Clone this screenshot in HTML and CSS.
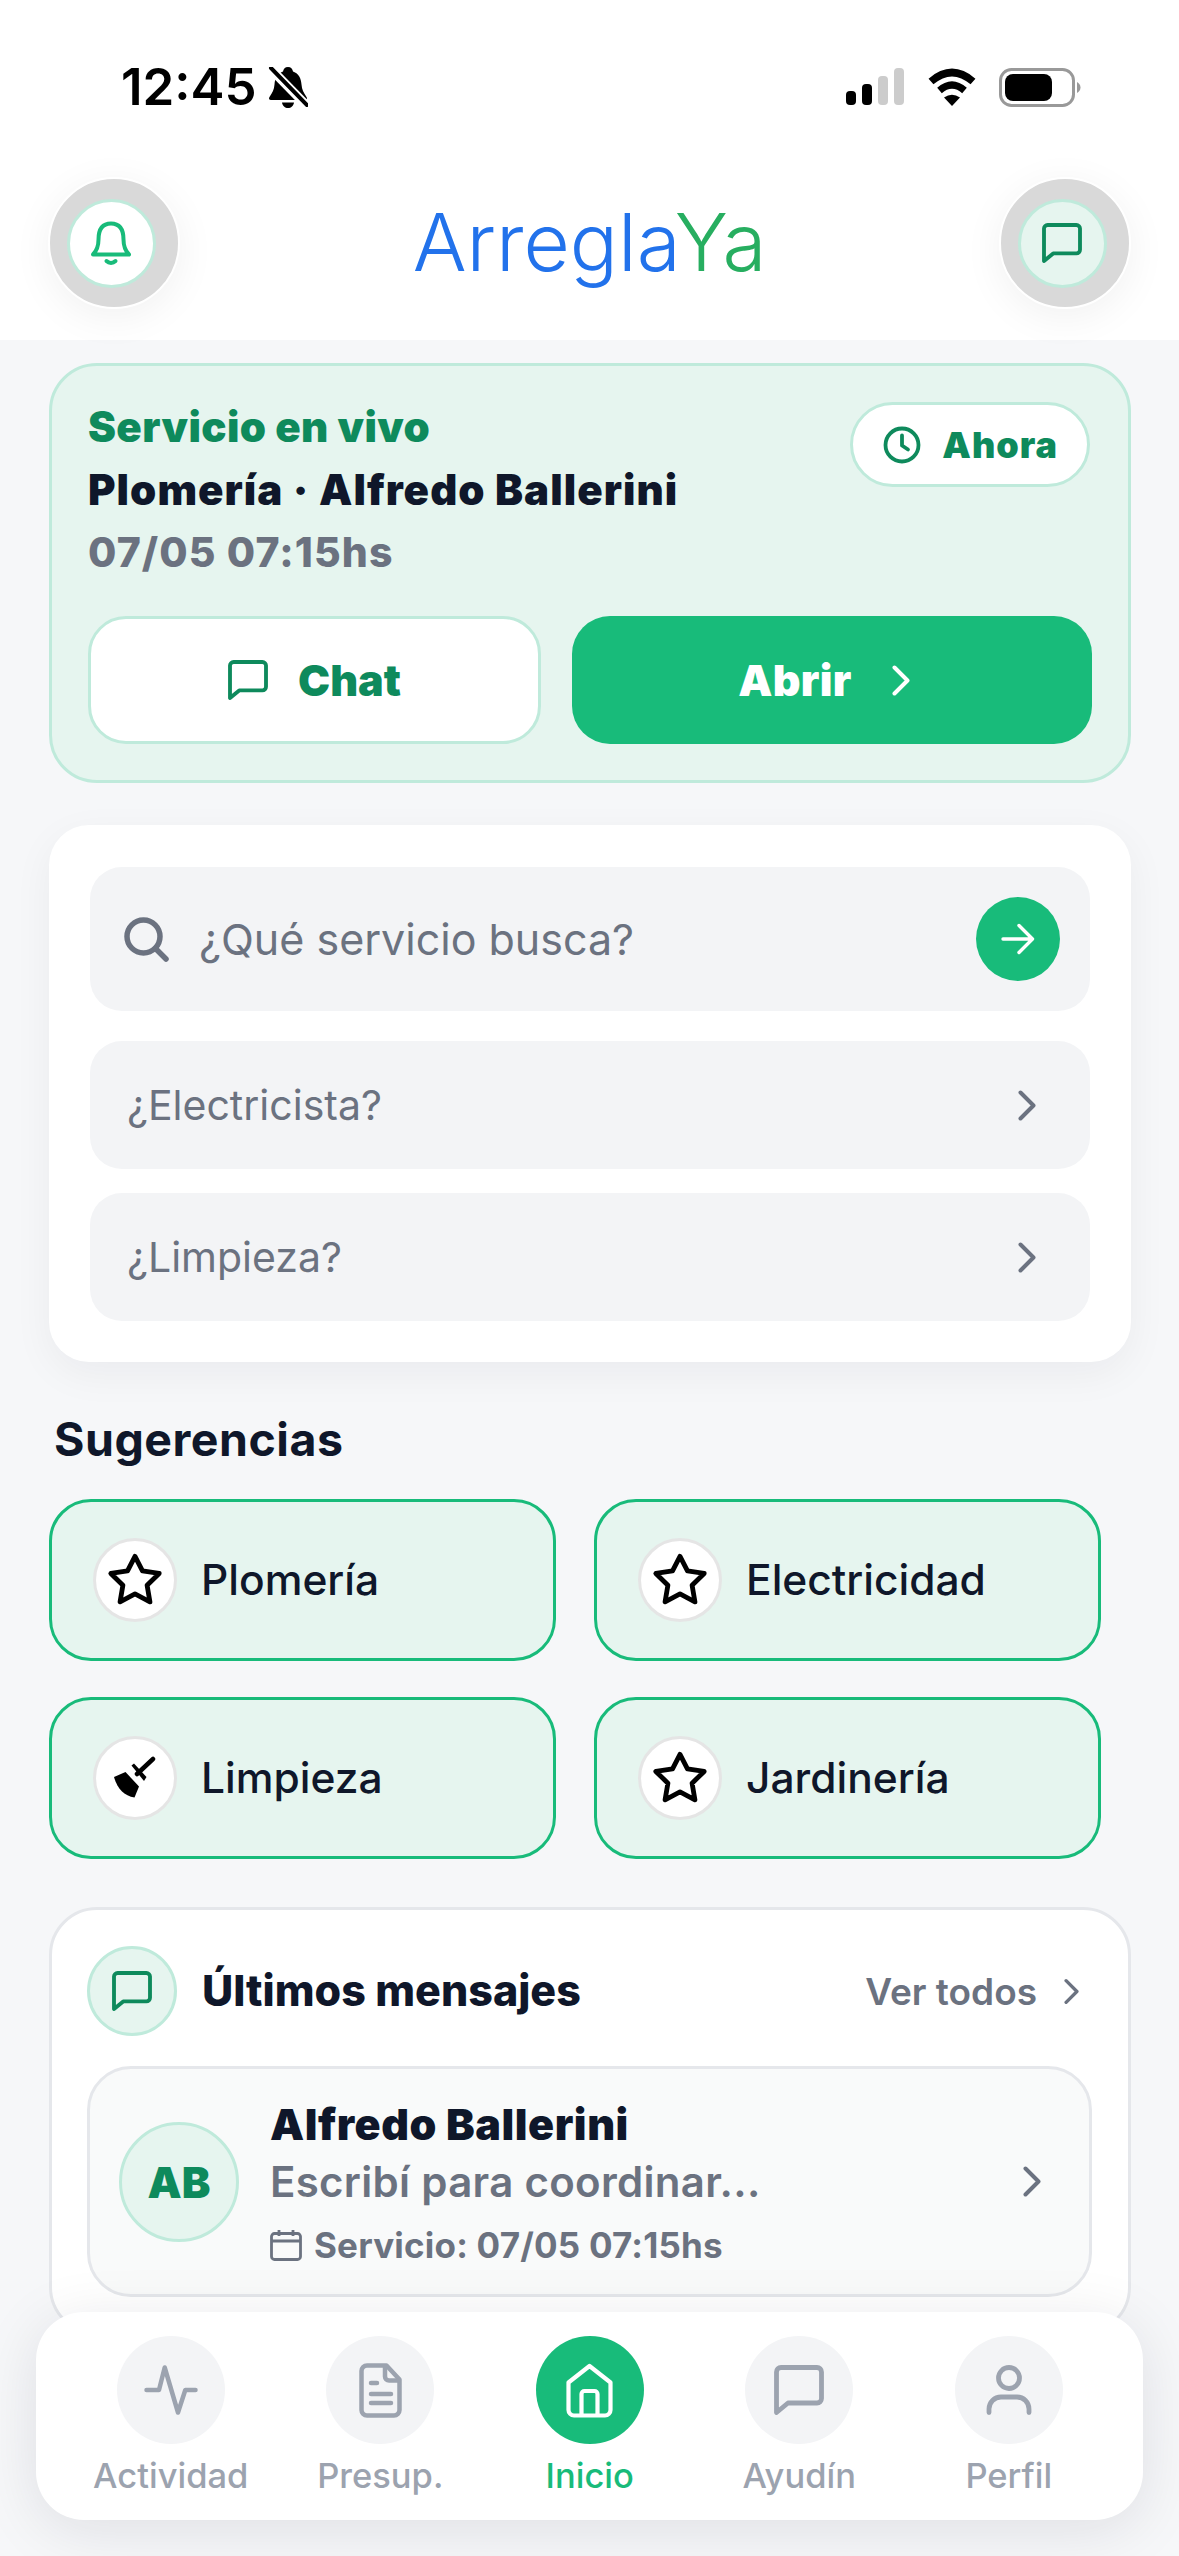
FILE: index.html
```html
<!DOCTYPE html>
<html lang="es">
  <head>
    <meta charset="utf-8">
    <title>ArreglaYa</title>
    <link rel="stylesheet" href="styles.css">
  </head>

  <body>
    <svg class="sprites" width="0" height="0">
      <symbol id="i-chat" viewBox="0 0 50 50">
        <path d="M7 2.5H43a4.5 4.5 0 0 1 4.5 4.5V33.5a4.5 4.5 0 0 1-4.5 4.5H14L2.5 47.5V7A4.5 4.5 0 0 1 7 2.5Z" fill="none" stroke="currentColor" stroke-width="4.8" stroke-linejoin="round"/>
      </symbol>
      <symbol id="i-chevron" viewBox="0 0 18 31">
        <path d="M2.5 2.5L15.5 15.5L2.5 28.5" fill="none" stroke="currentColor" stroke-width="4" stroke-linecap="round" stroke-linejoin="round"/>
      </symbol>
      <symbol id="i-star" viewBox="0 0 24 24">
        <path d="M12 2.2L15.09 8.26L22 9.27L17 14.14L18.18 21.02L12 17.77L5.82 21.02L7 14.14L2 9.27L8.91 8.26Z" fill="none" stroke="currentColor" stroke-width="2" stroke-linejoin="round"/>
      </symbol>
    </svg>

    <header class="top">
      <div class="status">
        <div class="status-left">
          <span class="time">12:45</span>
          <svg class="bell-off" viewBox="0 0 40 42">
            <path d="M20 0c3 0 4.500 2 5 4.500c6 2 8 7 8.500 13c.4 5 2 8 5 12.500c1 1.500 .5 3-1.500 3H3c-2 0-2.500-1.500-1.500-3c3-4.500 4.600-7.500 5-12.500c.5-6 2.500-11 8.500-13C15.500 2 17 0 20 0Z"/>
            <path d="M14 35.500h12c-.5 3.500-3 5.500-6 5.500s-5.500-2-6-5.500Z"/>
            <path d="M1 0L40 40" stroke="#fff" stroke-width="9"/>
            <path d="M3 1L39 38" stroke="#000" stroke-width="4" stroke-linecap="round"/>
          </svg>
        </div>
        <div class="status-right">
          <svg class="signal" viewBox="0 0 58 37">
            <rect x="0" y="23" width="10" height="14" rx="4"/>
            <rect x="16" y="16" width="10" height="21" rx="4"/>
            <rect class="off" x="32" y="8" width="10" height="29" rx="4"/>
            <rect class="off" x="48" y="0" width="10" height="37" rx="4"/>
          </svg>
          <svg class="wifi" viewBox="0 0 50 38">
            <path d="M4 13.500Q25 -4.500 46 13.500" fill="none" stroke="#000" stroke-width="7.500"/>
            <path d="M12.500 22.500Q25 11.500 37.500 22.500" fill="none" stroke="#000" stroke-width="7"/>
            <path d="M25 38L17 29.500Q25 24 33 29.500Z"/>
          </svg>
          <svg class="battery" viewBox="0 0 82 39">
            <rect x="1.500" y="1.500" width="73" height="36" rx="11" fill="none" stroke="#999" stroke-width="3"/>
            <rect x="6" y="6" width="47" height="27" rx="8"/>
            <path d="M78 14c2 1 3.500 3 3.500 5.500s-1.500 4.500-3.500 5.500Z" fill="#999"/>
          </svg>
        </div>
      </div>
      <div class="appbar">
        <div class="round-btn">
          <div class="round-inner">
            <svg class="bell" viewBox="0 0 40 44">
              <path d="M2 33.500c4-4 5.500-8 5.500-15C7.500 8 12 2.500 20 2.500S32.500 8 32.500 18.500c0 7 1.500 11 5.500 15Z" fill="none" stroke="currentColor" stroke-width="4" stroke-linejoin="round"/>
              <path d="M15.500 40c2.500 2.500 6.500 2.500 9 0" fill="none" stroke="currentColor" stroke-width="4" stroke-linecap="round"/>
            </svg>
          </div>
        </div>
        <div class="logo">Arregla<span class="logo-ya">Ya</span></div>
        <div class="round-btn">
          <div class="round-inner tint">
            <svg class="ic-40 dark"><use href="#i-chat"/></svg>
          </div>
        </div>
      </div>
    </header>

    <main class="main">
      <section class="live">
        <div class="live-head">
          <div>
            <div class="live-title">Servicio en vivo</div>
            <div class="live-name">Plomería · Alfredo Ballerini</div>
            <div class="live-date">07/05 07:15hs</div>
          </div>
          <div class="pill">
            <svg class="clock" viewBox="0 0 38 38">
              <circle cx="19" cy="19" r="16.500" fill="none" stroke="currentColor" stroke-width="3.800"/>
              <path d="M19 9.500V19.500L25 23.500" fill="none" stroke="currentColor" stroke-width="3.800" stroke-linecap="round" stroke-linejoin="round"/>
            </svg>
            <span>Ahora</span>
          </div>
        </div>
        <div class="live-actions">
          <div class="btn btn-light">
            <svg class="ic-40"><use href="#i-chat"/></svg>
            <span>Chat</span>
          </div>
          <div class="btn btn-green">
            <span>Abrir</span>
            <svg class="chev"><use href="#i-chevron"/></svg>
          </div>
        </div>
      </section>

      <section class="search-card">
        <div class="search-row">
          <svg class="search-ic" viewBox="0 0 45 45">
            <circle cx="19.500" cy="19.500" r="16.500" fill="none" stroke="currentColor" stroke-width="5.500"/>
            <path d="M31.500 31.500L42 42" fill="none" stroke="currentColor" stroke-width="5.500" stroke-linecap="round"/>
          </svg>
          <span class="search-text">¿Qué servicio busca?</span>
          <div class="go">
            <svg class="arrow" viewBox="0 0 34 34">
              <path d="M2 17H31M18 3.500L31.500 17L18 30.500" fill="none" stroke="#fff" stroke-width="3.400" stroke-linecap="round" stroke-linejoin="round"/>
            </svg>
          </div>
        </div>
        <div class="hint-row">
          <span>¿Electricista?</span>
          <svg class="chev"><use href="#i-chevron"/></svg>
        </div>
        <div class="hint-row">
          <span>¿Limpieza?</span>
          <svg class="chev"><use href="#i-chevron"/></svg>
        </div>
      </section>

      <h2 class="section-title">Sugerencias</h2>
      <section class="suggest">
        <div class="sug">
          <div class="sug-ic"><svg class="star"><use href="#i-star"/></svg></div>
          <span>Plomería</span>
        </div>
        <div class="sug">
          <div class="sug-ic"><svg class="star"><use href="#i-star"/></svg></div>
          <span>Electricidad</span>
        </div>
        <div class="sug">
          <div class="sug-ic">
            <svg class="broom" viewBox="0 0 44 44">
              <path d="M24 18L40 3" stroke="#000" stroke-width="4.500" stroke-linecap="round"/>
              <path d="M18.500 9.500L21 7.500L33.500 21L31 25Z"/>
              <path d="M1 21L12.500 16L26 30.500L21.500 41.500C11 40 4 32 1 21Z"/>
            </svg>
          </div>
          <span>Limpieza</span>
        </div>
        <div class="sug">
          <div class="sug-ic"><svg class="star"><use href="#i-star"/></svg></div>
          <span>Jardinería</span>
        </div>
      </section>

      <section class="messages">
        <div class="msg-head">
          <div class="msg-ic"><svg class="ic-40 dark"><use href="#i-chat"/></svg></div>
          <div class="msg-title">Últimos mensajes</div>
          <div class="see-all">
            <span>Ver todos</span>
            <svg class="chev-sm"><use href="#i-chevron"/></svg>
          </div>
        </div>
        <div class="msg-item">
          <div class="avatar">AB</div>
          <div class="msg-body">
            <div class="msg-name">Alfredo Ballerini</div>
            <div class="msg-sub">Escribí para coordinar...</div>
            <div class="msg-meta">
              <svg class="cal" viewBox="0 0 32 32">
                <rect x="1.500" y="4.500" width="29" height="26" rx="3" fill="none" stroke="currentColor" stroke-width="2.800"/>
                <path d="M1.500 12H30.500M9 1V7M23 1V7" fill="none" stroke="currentColor" stroke-width="2.800"/>
              </svg>
              <span>Servicio: 07/05 07:15hs</span>
            </div>
          </div>
          <svg class="chev"><use href="#i-chevron"/></svg>
        </div>
      </section>
    </main>

    <nav class="tabbar">
      <div class="tab">
        <div class="tab-ic">
          <svg class="ic-activity" viewBox="0 0 54 50">
            <path d="M2.500 25H15L20.700 2.500L34 47.500L41.300 25H51.500" fill="none" stroke="currentColor" stroke-width="4.500" stroke-linecap="round" stroke-linejoin="round"/>
          </svg>
        </div>
        <span>Actividad</span>
      </div>
      <div class="tab">
        <div class="tab-ic">
          <svg class="ic-doc" viewBox="0 0 43 55">
            <path d="M8 2.500H27.500L40.500 16.500V47a5.500 5.500 0 0 1-5.500 5.500H8A5.500 5.500 0 0 1 2.500 47V8A5.500 5.500 0 0 1 8 2.500Z" fill="none" stroke="currentColor" stroke-width="4.500" stroke-linejoin="round"/>
            <path d="M26 3V13.500a4 4 0 0 0 4 4H40" fill="none" stroke="currentColor" stroke-width="4.500"/>
            <path d="M12 20H18M12 31H32M12 40H32" fill="none" stroke="currentColor" stroke-width="4.500" stroke-linecap="round"/>
          </svg>
        </div>
        <span>Presup.</span>
      </div>
      <div class="tab tab-on">
        <div class="tab-ic">
          <svg class="ic-home" viewBox="0 0 47 55">
            <path d="M2.500 19.500L23.500 3L44.500 19.500V47a5.500 5.500 0 0 1-5.500 5.500H8A5.500 5.500 0 0 1 2.500 47Z" fill="none" stroke="#fff" stroke-width="4.200" stroke-linejoin="round"/>
            <path d="M15.500 52V31a3 3 0 0 1 3-3H28.500a3 3 0 0 1 3 3V52" fill="none" stroke="#fff" stroke-width="4.200"/>
          </svg>
        </div>
        <span>Inicio</span>
      </div>
      <div class="tab">
        <div class="tab-ic"><svg class="ic-50"><use href="#i-chat"/></svg></div>
        <span>Ayudín</span>
      </div>
      <div class="tab">
        <div class="tab-ic">
          <svg class="ic-50" viewBox="0 0 50 50">
            <circle cx="25" cy="13" r="10.500" fill="none" stroke="currentColor" stroke-width="4.800"/>
            <path d="M5 47.500V44a12 12 0 0 1 12-12H33a12 12 0 0 1 12 12v3.500" fill="none" stroke="currentColor" stroke-width="4.800" stroke-linecap="round"/>
          </svg>
        </div>
        <span>Perfil</span>
      </div>
    </nav>
  </body>
</html>
```

FILE: styles.css
```css
* {
  box-sizing: border-box;
}

html, body {
  margin: 0;
  padding: 0;
}

body {
  position: relative;
  width: 1179px;
  height: 2556px;
  overflow: hidden;
  background-color: #f6f7f9;
  color: #0f172a;
  font-family: 'Inter', 'Liberation Sans', sans-serif;
}

svg {
  display: block;
  flex: none;
}

.sprites {
  position: absolute;
}

/* top area */

.top {
  height: 340px;
  background-color: #fff;
}

.status {
  display: flex;
  justify-content: space-between;
  height: 177px;
  padding: 57px 98px 0 121px;
}

.status-left {
  display: flex;
  align-items: flex-start;
  gap: 11px;
}

.time {
  font-size: 51px;
  line-height: 60px;
  font-weight: 600;
  color: #000;
}

.bell-off {
  width: 40px;
  height: 42px;
  margin-top: 10px;
}

.status-right {
  display: flex;
  align-items: flex-start;
  padding-top: 11px;
}

.signal {
  width: 58px;
  height: 37px;
}

.signal .off {
  fill: #ccc;
}

.wifi {
  width: 50px;
  height: 38px;
  margin-left: 23px;
}

.battery {
  width: 82px;
  height: 39px;
  margin-left: 22px;
}

.appbar {
  display: flex;
  justify-content: space-between;
  align-items: flex-start;
  padding: 0 48px;
}

.round-btn {
  display: flex;
  align-items: center;
  justify-content: center;
  width: 132px;
  height: 132px;
  padding-right: 6px;
  border: 2px solid #fff;
  border-radius: 50%;
  background-color: #d9d9d9;
  box-shadow: 0 8px 40px rgba(0, 0, 0, 0.06);
}

.round-inner {
  display: flex;
  align-items: center;
  justify-content: center;
  width: 89px;
  height: 89px;
  border: 3px solid #bfeadb;
  border-radius: 50%;
  background-color: #fff;
  color: #18bb7a;
}

.round-inner.tint {
  background-color: #e6f5ef;
}

.bell {
  width: 40px;
  height: 44px;
}

.logo {
  margin-top: 15px;
  font-size: 80px;
  line-height: 100px;
  font-weight: 300;
  color: #2272eb;
}

.logo-ya {
  color: #27ae60;
}

.ic-40 {
  width: 40px;
  height: 40px;
}

.dark {
  color: #0e8a5c;
}

.chev {
  width: 18px;
  height: 31px;
}

/* page */

.main {
  padding: 23px 48px 0 49px;
}

.live {
  height: 420px;
  padding: 29px 36px 36px;
  border: 3px solid #bfeadb;
  border-radius: 48px;
  background-color: #e6f5ef;
}

.live-head {
  display: flex;
  justify-content: space-between;
  align-items: flex-start;
  height: 190px;
}

.live-title,
.live-name,
.live-date {
  font-size: 41px;
  line-height: 63px;
  font-weight: 900;
}

.live-title {
  font-size: 42px;
  letter-spacing: 0.4px;
  color: #0e8a5c;
}

.live-name {
  font-size: 42px;
  letter-spacing: 1.05px;
}

.live-date {
  color: #6b7280;
  font-weight: 800;
  letter-spacing: 1.1px;
}

.pill {
  display: flex;
  align-items: center;
  gap: 21px;
  height: 85px;
  margin: 7px 2px 0 0;
  padding: 0 29px 0 30px;
  border: 3px solid #bfeadb;
  border-radius: 43px;
  background-color: #fff;
  color: #0e8a5c;
  font-size: 36px;
  font-weight: 900;
  letter-spacing: 1px;
}

.clock {
  width: 38px;
  height: 38px;
}

.live-actions {
  display: grid;
  grid-template-columns: 453px 1fr;
  gap: 31px;
  margin-top: 31px;
}

.btn {
  display: flex;
  align-items: center;
  justify-content: center;
  height: 128px;
  border-radius: 38px;
  font-size: 43px;
  font-weight: 900;
}

.btn-light {
  gap: 30px;
  border: 3px solid #bfeadb;
  background-color: #fff;
  color: #0e8a5c;
}

.btn-green {
  gap: 40px;
  padding-right: 16px;
  background-color: #18bb7a;
  color: #fff;
  letter-spacing: 0.3px;
}

.search-card {
  display: flex;
  flex-direction: column;
  margin-top: 42px;
  padding: 42px 41px 41px;
  border-radius: 40px;
  background-color: #fff;
  box-shadow: 0 12px 40px rgba(15, 23, 42, 0.05);
}

.search-row {
  display: flex;
  align-items: center;
  height: 144px;
  padding: 0 30px 0 34px;
  border-radius: 32px;
  background-color: #f3f4f6;
  color: #6b7280;
}

.search-ic {
  width: 45px;
  height: 45px;
}

.search-text {
  flex: 1;
  margin-left: 30px;
  font-size: 43px;
}

.go {
  display: flex;
  align-items: center;
  justify-content: center;
  width: 84px;
  height: 84px;
  border-radius: 50%;
  background-color: #18bb7a;
}

.arrow {
  width: 34px;
  height: 34px;
}

.hint-row {
  display: flex;
  justify-content: space-between;
  align-items: center;
  height: 128px;
  margin-top: 24px;
  padding: 0 54px 0 37px;
  border-radius: 32px;
  background-color: #f3f4f6;
  color: #6b7280;
  font-size: 41px;
}

.search-row + .hint-row {
  margin-top: 30px;
}

.section-title {
  margin: 47px 0 0;
  padding-left: 5px;
  font-size: 46.5px;
  line-height: 60px;
  font-weight: 700;
  letter-spacing: 0.5px;
}

.suggest {
  display: grid;
  grid-template-columns: 507px 507px;
  grid-auto-rows: 162px;
  gap: 36px 38px;
  margin-top: 30px;
}

.sug {
  display: flex;
  align-items: center;
  gap: 24px;
  padding-left: 41px;
  border: 3px solid #18bb7a;
  border-radius: 42px;
  background-color: #e6f5ef;
  font-size: 42.5px;
  font-weight: 500;
}

.sug span {
  margin-bottom: 2px;
}

.sug-ic {
  display: flex;
  align-items: center;
  justify-content: center;
  width: 84px;
  height: 84px;
  border: 3px solid #e5e5e5;
  border-radius: 50%;
  background-color: #fff;
  color: #000;
}

.star {
  width: 58px;
  height: 58px;
}

.broom {
  width: 44px;
  height: 44px;
}

.messages {
  height: 428px;
  margin-top: 48px;
  padding: 36px 36px 0 35px;
  border: 3px solid #e5e7eb;
  border-radius: 48px;
  background-color: #fff;
}

.msg-head {
  display: flex;
  align-items: center;
  height: 90px;
}

.msg-ic {
  display: flex;
  align-items: center;
  justify-content: center;
  width: 90px;
  height: 90px;
  border: 3px solid #bfeadb;
  border-radius: 50%;
  background-color: #e6f5ef;
}

.msg-title {
  flex: 1;
  margin-left: 25px;
  margin-bottom: 2px;
  font-size: 43px;
  font-weight: 800;
}

.see-all {
  display: flex;
  align-items: center;
  gap: 27px;
  padding-right: 13px;
  color: #6b7280;
  font-size: 37px;
  font-weight: 600;
}

.chev-sm {
  width: 15px;
  height: 27px;
}

.msg-item {
  display: flex;
  align-items: center;
  height: 231px;
  margin-top: 30px;
  padding: 0 48px 0 29px;
  border: 3px solid #e5e7eb;
  border-radius: 44px;
  background-color: #f9fafa;
  color: #6b7280;
}

.avatar {
  display: flex;
  align-items: center;
  justify-content: center;
  width: 120px;
  height: 120px;
  border: 3px solid #bfeadb;
  border-radius: 50%;
  background-color: #e6f5ef;
  color: #0e8a5c;
  font-size: 43px;
  font-weight: 900;
}

.msg-body {
  flex: 1;
  margin-left: 31px;
}

.msg-name {
  color: #0f172a;
  font-size: 43px;
  line-height: 60px;
  font-weight: 900;
  letter-spacing: 0.55px;
}

.msg-sub {
  font-size: 42px;
  line-height: 56px;
  font-weight: 600;
  letter-spacing: 0.3px;
}

.msg-meta {
  display: flex;
  align-items: center;
  gap: 12px;
  margin-top: 11px;
  font-size: 35px;
  line-height: 48px;
  font-weight: 700;
  letter-spacing: 0.2px;
}

.cal {
  width: 32px;
  height: 32px;
}

/* tab bar, sits over the page */

.tabbar {
  position: absolute;
  left: 36px;
  bottom: 36px;
  display: flex;
  width: 1107px;
  height: 208px;
  padding: 24px 0 0 30px;
  border-radius: 48px;
  background-color: #fff;
  box-shadow: 0 10px 60px rgba(15, 23, 42, 0.1);
}

.tab {
  display: flex;
  flex-direction: column;
  align-items: center;
  width: 209.5px;
  color: #9ca3af;
  font-size: 34.5px;
  line-height: 40px;
  font-weight: 500;
}

.tab-ic {
  display: flex;
  align-items: center;
  justify-content: center;
  width: 108px;
  height: 108px;
  margin-bottom: 12px;
  border-radius: 50%;
  background-color: #f3f4f6;
}

.tab-on {
  color: #18bb7a;
}

.tab-on .tab-ic {
  background-color: #18bb7a;
}

.ic-50 {
  width: 50px;
  height: 50px;
}

.ic-activity {
  width: 54px;
  height: 50px;
}

.ic-doc {
  width: 43px;
  height: 55px;
}

.ic-home {
  width: 47px;
  height: 55px;
}
```
